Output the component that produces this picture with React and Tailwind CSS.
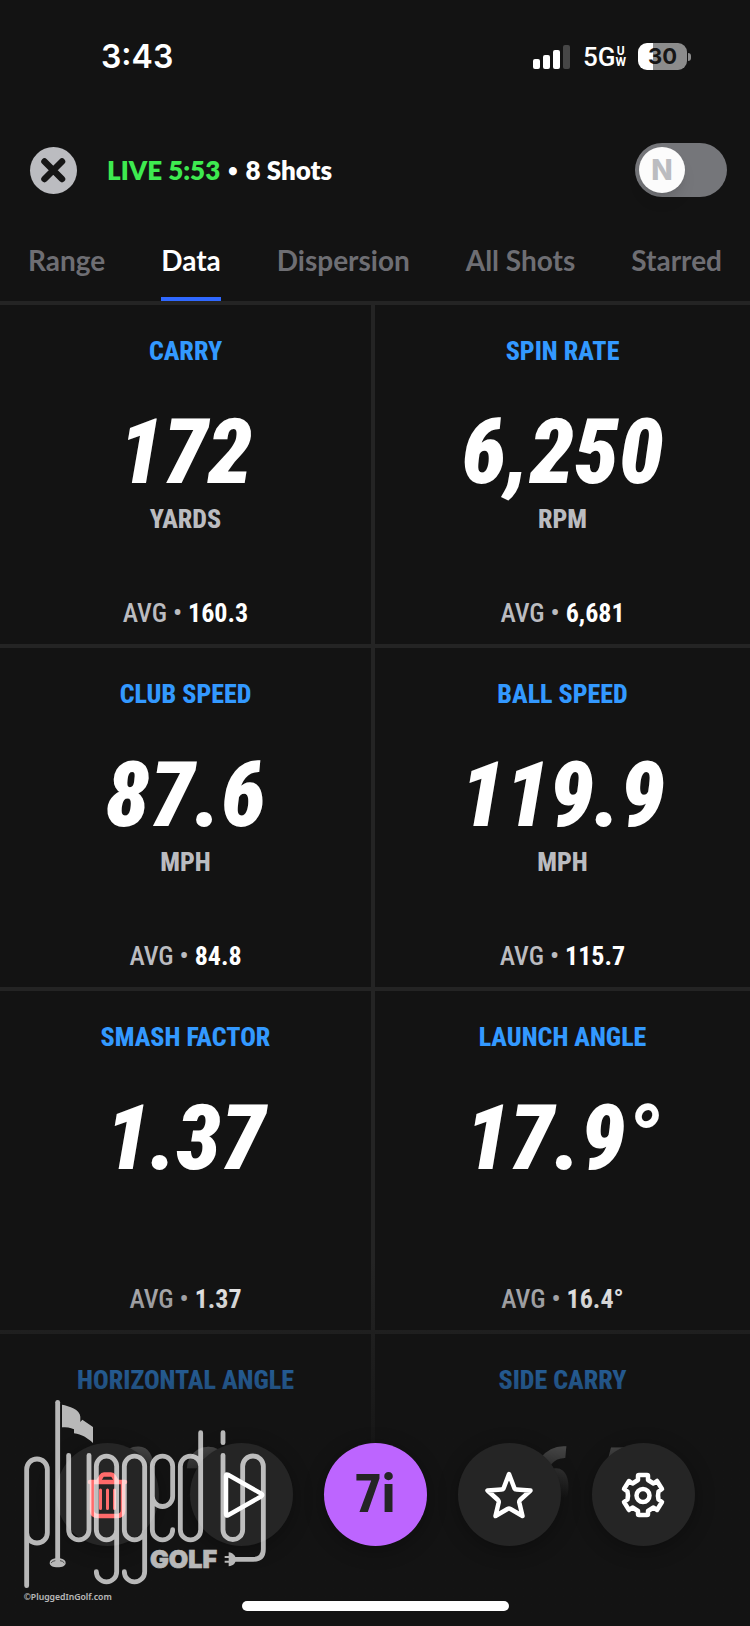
import React, { useState } from "react";

const condensed = "font-['Roboto_Condensed','Liberation_Sans_Narrow','Liberation_Sans',sans-serif]";

const metrics = [
  { label: "CARRY", value: "172", unit: "YARDS", avg: "160.3" },
  { label: "SPIN RATE", value: "6,250", unit: "RPM", avg: "6,681" },
  { label: "CLUB SPEED", value: "87.6", unit: "MPH", avg: "84.8" },
  { label: "BALL SPEED", value: "119.9", unit: "MPH", avg: "115.7" },
  { label: "SMASH FACTOR", value: "1.37", avg: "1.37" },
  { label: "LAUNCH ANGLE", value: "17.9°", avg: "16.4°" },
  { label: "HORIZONTAL ANGLE", value: "0.2°" },
  { label: "SIDE CARRY", value: "16.5" },
];

const tabs = ["Range", "Data", "Dispersion", "All Shots", "Starred"];

function StatusBar() {
  return (
    <div className="flex h-[113px] shrink-0 items-center justify-between pr-[59px] pl-[101px] text-white">
      <span className="font-[Inter,sans-serif] text-[32px] font-semibold">3:43</span>
      <div className="flex items-center gap-3">
        <svg className="h-6 w-10" viewBox="0 0 40 24" aria-hidden="true">
          <rect x="2" y="14" width="7" height="10" rx="2" fill="#fff" />
          <rect x="12" y="10" width="7" height="14" rx="2" fill="#fff" />
          <rect x="22" y="5" width="7" height="19" rx="2" fill="#fff" />
          <rect x="32" y="0" width="7" height="24" rx="2" fill="#464646" />
        </svg>
        <div className="flex items-center font-[Roboto,sans-serif]">
          <span className="text-[26px] leading-7 font-medium">5G</span>
          <span className="flex flex-col items-center text-xs leading-[11px] font-bold">
            <span>U</span>
            <span>W</span>
          </span>
        </div>
        <div className="flex items-center gap-px">
          <div className="flex h-[27px] w-[49px] items-center justify-center rounded-[9px] bg-[linear-gradient(90deg,#fff_31%,#8c8c8c_31%)] font-[Inter,sans-serif] text-[22px] font-bold text-[#161616]">
            30
          </div>
          <div className="h-2 w-[3px] rounded-r-full bg-[#8c8c8c]" />
        </div>
      </div>
    </div>
  );
}

function SessionHeader() {
  const [on, setOn] = useState(false);
  return (
    <header className="flex h-[114px] shrink-0 items-center pr-[23px] pl-[30px]">
      <button type="button" aria-label="Close" className="size-[47px] rounded-full bg-[#bbbcc0]">
        <svg viewBox="0 0 47 47" fill="none" stroke="#161616" strokeWidth="6.5" strokeLinecap="round" aria-hidden="true">
          <path d="M14.500 14.500 L32 32 M32 14.500 L14.500 32" />
        </svg>
      </button>
      <p className="ml-[30px] flex grow items-center gap-2 font-[Lato,sans-serif] text-[26px] font-extrabold text-white">
        <span className="text-[#3eea50]">LIVE 5:53</span>
        <span className="text-base">•</span>
        <span>8 Shots</span>
      </p>
      <button
        type="button"
        role="switch"
        aria-checked={on}
        aria-label="Normalize"
        onClick={() => setOn(!on)}
        className={`flex h-[54px] w-[92px] items-center rounded-full bg-[#75767a] px-1 ${on ? "justify-end" : "justify-start"}`}
      >
        <span className="flex size-[46px] items-center justify-center rounded-full bg-[#fcfcfc] font-[Inter,sans-serif] text-[28px] font-extrabold text-[#bbbcc0] shadow-lg">
          N
        </span>
      </button>
    </header>
  );
}

function Tabs() {
  const [active, setActive] = useState("Data");
  return (
    <nav className="flex h-[78px] shrink-0 justify-between border-b-4 border-[#242424] px-7 font-[Lato,sans-serif] text-[28px] font-bold">
      {tabs.map((tab) => (
        <button
          key={tab}
          type="button"
          onClick={() => setActive(tab)}
          className={`border-b-4 pt-1 pb-2 ${tab === active ? "border-[#2f68ff] text-white" : "border-transparent text-[#6e6e73]"}`}
        >
          {tab}
        </button>
      ))}
    </nav>
  );
}

function Metric({ label, value, unit, avg }) {
  return (
    <section className="flex h-[343px] flex-col items-center border-b-4 border-[#242424] pt-[30px] odd:border-r-4">
      <h2 className="text-[26px] leading-8 font-extrabold text-[#3399ff]">{label}</h2>
      <p className="mt-10 text-[90px] leading-[92px] font-black text-white italic">{value}</p>
      <p className="mt-1 h-8 text-[26px] leading-8 font-extrabold text-[#bbbcc0]">{unit}</p>
      {avg && (
        <p className="mt-[62px] text-[26px] leading-8 font-medium text-[#bbbcc0]">
          AVG • <b className="font-bold text-white">{avg}</b>
        </p>
      )}
    </section>
  );
}

function ToolButton({ label, className = "bg-[#252525]", children }) {
  return (
    <button
      type="button"
      aria-label={label}
      className={`flex size-[103px] items-center justify-center rounded-full shadow-[0_4px_20px_rgba(0,0,0,0.3)] ${className}`}
    >
      {children}
    </button>
  );
}

const iconProps = {
  viewBox: "0 0 48 48",
  fill: "none",
  strokeWidth: 4.5,
  strokeLinecap: "round",
  strokeLinejoin: "round",
  "aria-hidden": true,
  className: "size-12",
};

function Toolbar() {
  return (
    <div className="flex justify-center gap-[31px]">
      <ToolButton label="Delete">
        <svg {...iconProps} stroke="#ff6b6b">
          <path d="M7 11 H42" />
          <path d="M15.500 10 L18.500 5 Q19.300 3.500 21 3.500 H28 Q29.700 3.500 30.500 5 L33.500 10" />
          <path d="M9 12 V39 Q9 45 15 45 H34 Q40 45 40 39 V12" />
          <path d="M17.500 19 V37.500 M24.500 19 V37.500 M31.500 19 V37.500" strokeWidth="3" />
        </svg>
      </ToolButton>
      <ToolButton label="Play">
        <svg {...iconProps} stroke="#fff">
          <path d="M11 3.800 Q9 2.700 9 5 V43 Q9 45.300 11 44.200 L44 25.500 Q46.500 24 44 22.500 Z" />
        </svg>
      </ToolButton>
      <ToolButton label="Club" className="bg-[#bd65ff]">
        <span className={`text-[53px] leading-none font-extrabold text-[#252525] ${condensed}`}>7i</span>
      </ToolButton>
      <ToolButton label="Star">
        <svg {...iconProps} stroke="#fff">
          <path d="M24 3 L29.500 17.500 Q30 18.500 31.500 18.600 L45.500 19.500 L35 29 Q34 30 34.300 31.500 L37.500 45 L25.500 38 Q24 37.200 22.500 38 L10.500 45 L13.700 31.500 Q14 30 13 29 L2.500 19.500 L16.500 18.600 Q18 18.500 18.500 17.500 Z" />
        </svg>
      </ToolButton>
      <ToolButton label="Settings">
        <svg {...iconProps} stroke="#fff">
          <circle cx="24" cy="24.500" r="6.500" />
          <path d="M19 5 Q19 4 20 4 H28 Q29 4 29 5 V9 L34.500 12.500 L38 10 L43 18 L39.500 20.500 Q38.500 24.500 39.500 28.500 L43 31 L38 39 L34.500 36.500 L29 40 V43 Q29 44 28 44 H20 Q19 44 19 43 V40 L13.500 36.500 L10 39 L5 31 L8.500 28.500 Q9.500 24.500 8.500 20.500 L5 18 L10 10 L13.500 12.500 L19 9 Z" />
        </svg>
      </ToolButton>
    </div>
  );
}

function Watermark() {
  return (
    <svg
      className="pointer-events-none absolute bottom-5 left-5 h-[210px] w-[250px] opacity-70"
      viewBox="60 228 750 630"
      aria-hidden="true"
    >
      <g fill="none" stroke="#fff" strokeWidth="14.500" strokeLinecap="round" strokeLinejoin="round">
        <path d="M80 797V448a31 31 0 0 1 62 0V638a31 31 0 0 1-62 0" />
        <path d="M173 247V718" />
        <path d="M206 406V629a30.500 30.500 0 0 0 61 0V406" />
        <path d="M350 629a30.500 30.500 0 0 1-61 0V439a30.500 30.500 0 0 1 61 0V755a30.500 30.500 0 0 1-61 0" />
        <path d="M434 629a30.500 30.500 0 0 1-61 0V439a30.500 30.500 0 0 1 61 0V755a30.500 30.500 0 0 1-61 0" />
        <path d="M518 629a30.500 30.500 0 0 1-61 0V439a30.500 30.500 0 0 1 61 0V529a30.500 30.500 0 0 1-61 0" />
        <path d="M602 439a30.500 30.500 0 0 0-61 0V629a30.500 30.500 0 0 0 61 0V338" />
        <path d="M669 338V368" />
        <path d="M669 406V629a29.500 29.500 0 0 0 59 0V439a31 31 0 0 1 62 0V688q0 30-30 30H706" />
      </g>
      <g fill="#fff">
        <path d="M186 254C207 258 240 268 241 290V306L247 299L279 321V369C262 354 246 343 222 340V328C210 322 200 323 186 322Z" />
        <path d="M166 715C154 717 149 722 149 729C149 737 159 742 173 742S197 737 197 729C197 722 192 717 180 715Z" />
        <path d="M686 697C699 699 707 707 708 718C707 730 699 738 686 739V728H674V722H686V714H674V708H686Z" />
      </g>
      <path d="M153 729Q158 722 166 722M180 722Q188 722 193 729" fill="none" stroke="#222" strokeWidth="2" />
      <text x="450" y="743" fill="#fff" stroke="#fff" strokeWidth="2" fontSize="75" fontWeight="900" fontFamily="Inter, sans-serif">GOLF</text>
      <text x="71" y="840" fill="#fff" fontSize="26" fontWeight="600" fontFamily="Noto Sans, sans-serif">©PluggedInGolf.com</text>
    </svg>
  );
}

export default function App() {
  return (
    <div className="relative flex h-screen flex-col overflow-hidden bg-[#131313]">
      <StatusBar />
      <SessionHeader />
      <Tabs />
      <main className={`grid min-h-0 flex-1 auto-rows-max grid-cols-2 overflow-hidden ${condensed}`}>
        {metrics.map((m) => (
          <Metric key={m.label} {...m} />
        ))}
      </main>
      <footer className="absolute inset-x-0 bottom-0 flex h-[366px] flex-col justify-end bg-linear-to-b from-[#131313]/0 to-[#131313] to-65%">
        <Toolbar />
        <div className="mx-auto mt-[55px] mb-[15px] h-[10px] w-[267px] rounded-full bg-white" />
      </footer>
      <Watermark />
    </div>
  );
}
